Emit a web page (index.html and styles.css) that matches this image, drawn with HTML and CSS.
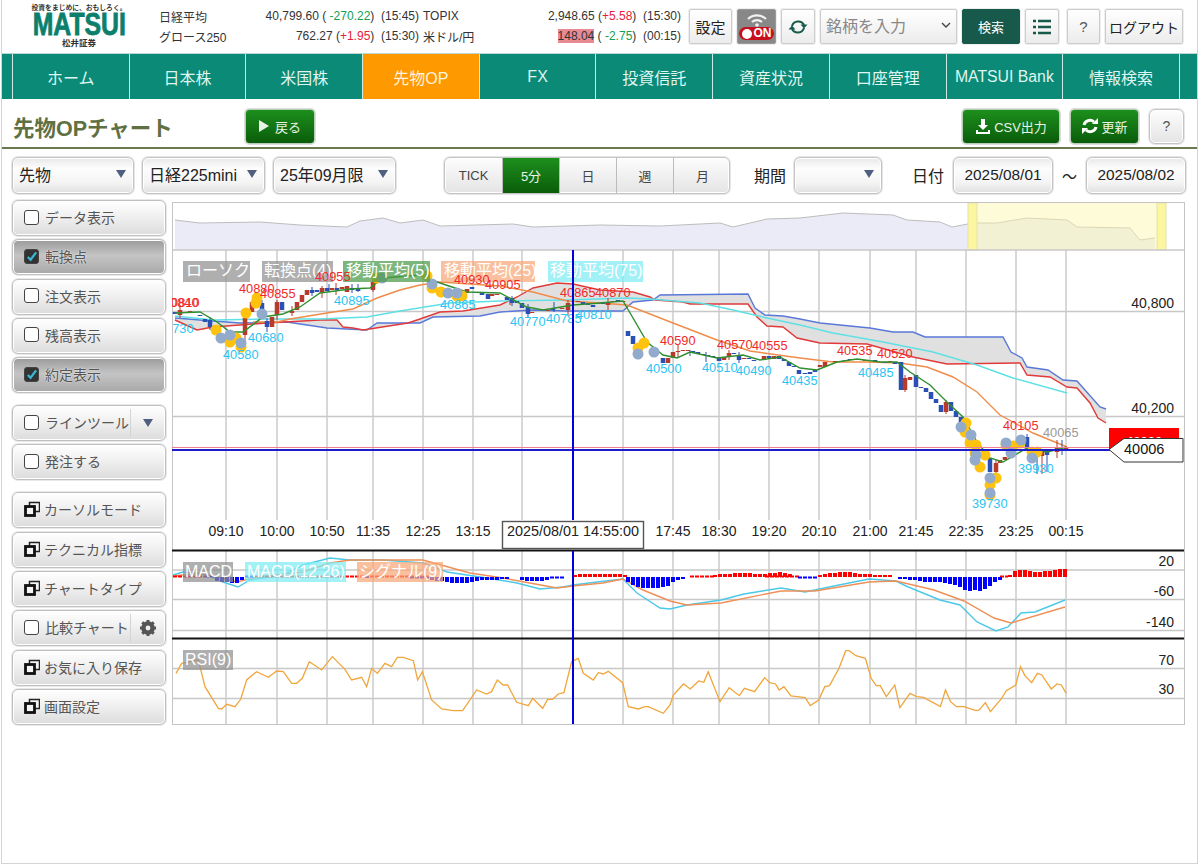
FILE: index.html
```html
<!DOCTYPE html>
<html lang="ja">
<head>
  <meta charset="UTF-8">
  <meta name="viewport" content="width=device-width, initial-scale=1.0">
  <title>先物OPチャート</title>
  <link rel="stylesheet" href="styles.css">
</head>
<body>
  <div class="page">
    <!-- Header -->
    <header class="header">
      <div class="logo">
        <span class="logo-tag">投資をまじめに、おもしろく。</span>
        <span class="logo-name">MATSUI</span>
        <span class="logo-sub">松井証券</span>
      </div>
      <div class="ticker">
        <div class="ticker-cell one"><span>日経平均</span><span>40,799.60 ( <i class="down">-270.22</i>)&nbsp; (15:45)</span></div>
        <div class="ticker-cell two"><span>TOPIX</span><span>2,948.65 (<i class="up">+5.58</i>)&nbsp; (15:30)</span></div>
        <div class="ticker-cell one"><span>グロース250</span><span>762.27 (<i class="up">+1.95</i>)&nbsp; (15:30)</span></div>
        <div class="ticker-cell two"><span>米ドル/円</span><span><b class="flash">148.04</b> ( <i class="down">-2.75</i>)&nbsp; (00:15)</span></div>
      </div>
      <div class="tools">
        <button class="tool tool-set">設定</button>
        <button class="tool tool-on">
          <svg width="24" height="15" viewBox="0 0 24 15"><path d="M3 7a13 13 0 0 1 18 0M7 10a7.500 7.500 0 0 1 10 0" fill="none" stroke="#f2f2f2" stroke-width="2.200"/><circle cx="12" cy="13" r="1.800" fill="#f2f2f2"/></svg>
          <span class="on-pill"><u></u>ON</span>
        </button>
        <button class="tool tool-icon">
          <svg width="20" height="20" viewBox="0 0 20 20"><path d="M4 9a6.500 6.500 0 0 1 12-1M16 11a6.500 6.500 0 0 1-12 1" fill="none" stroke="#17594a" stroke-width="2"/><path d="M12.500 7.500h7l-3.500 4zM7.500 12.500h-7l3.500-4z" fill="#17594a"/></svg>
        </button>
        <div class="tool search-box">
          <span>銘柄を入力</span>
          <svg width="10" height="6" viewBox="0 0 10 6"><path d="M1 1l4 4 4-4" fill="none" stroke="#444" stroke-width="1.400"/></svg>
        </div>
        <button class="tool tool-search">検索</button>
        <button class="tool tool-icon">
          <svg width="18" height="16" viewBox="0 0 18 16"><path d="M0 2h3M5 2h13M0 8h3M5 8h13M0 14h3M5 14h13" stroke="#17594a" stroke-width="2.400"/></svg>
        </button>
        <button class="tool tool-help">?</button>
        <button class="tool tool-logout">ログアウト</button>
      </div>
    </header>

    <!-- Main navigation -->
    <nav class="nav">
      <span class="nav-gap"></span>
      <a>ホーム</a>
      <a>日本株</a>
      <a>米国株</a>
      <a class="active">先物OP</a>
      <a>FX</a>
      <a>投資信託</a>
      <a>資産状況</a>
      <a>口座管理</a>
      <a class="small">MATSUI Bank</a>
      <a>情報検索</a>
      <span class="nav-gap"></span>
    </nav>

    <!-- Title row -->
    <div class="title-row">
      <h1>先物OPチャート</h1>
      <button class="green-btn back-btn"><i class="play"></i>戻る</button>
      <div class="title-actions">
        <button class="green-btn csv-btn">
          <svg width="16" height="17" viewBox="0 0 16 17"><path d="M6 1h4v6h3l-5 5-5-5h3zM1 12v4h14v-4h-2v2H3v-2z" fill="#fff"/></svg>CSV出力
        </button>
        <button class="green-btn refresh-btn">
          <svg width="18" height="18" viewBox="0 0 18 18"><path d="M3 8a6 6 0 0 1 10-3M15 10a6 6 0 0 1-10 3" fill="none" stroke="#fff" stroke-width="3"/><path d="M11 7h6V1zM7 11H1v6z" fill="#fff"/></svg>更新
        </button>
        <button class="soft-btn help-btn">?</button>
      </div>
    </div>

    <!-- Chart conditions -->
    <div class="controls">
      <div class="soft-btn select w-122"><span>先物</span><i class="caret"></i></div>
      <div class="soft-btn select w-123"><span>日経225mini</span><i class="caret"></i></div>
      <div class="soft-btn select w-123"><span>25年09月限</span><i class="caret"></i></div>
      <div class="soft-btn segment">
        <span class="tick">TICK</span>
        <span class="on">5分</span>
        <span>日</span>
        <span>週</span>
        <span>月</span>
      </div>
      <label class="ctl-label period-label">期間</label>
      <div class="soft-btn select w-88"><span></span><i class="caret"></i></div>
      <label class="ctl-label date-label">日付</label>
      <div class="soft-btn date">2025/08/01</div>
      <span class="tilde">～</span>
      <div class="soft-btn date">2025/08/02</div>
    </div>

    <div class="content">
      <!-- Left side buttons -->
      <aside class="side">
        <div class="side-group">
          <div class="side-btn"><i class="check"></i>データ表示</div>
          <div class="side-btn pressed"><i class="check checked"><svg width="14" height="14" viewBox="0 0 14 14"><path d="M3 7l3 3 6-8" fill="none" stroke="#3ab8d8" stroke-width="2.400"/></svg></i>転換点</div>
          <div class="side-btn"><i class="check"></i>注文表示</div>
          <div class="side-btn"><i class="check"></i>残高表示</div>
          <div class="side-btn pressed"><i class="check checked"><svg width="14" height="14" viewBox="0 0 14 14"><path d="M3 7l3 3 6-8" fill="none" stroke="#3ab8d8" stroke-width="2.400"/></svg></i>約定表示</div>
        </div>
        <div class="side-group">
          <div class="side-btn split"><i class="check"></i>ラインツール<span class="side-extra"><i class="caret"></i></span></div>
          <div class="side-btn"><i class="check"></i>発注する</div>
        </div>
        <div class="side-group">
          <div class="side-btn"><svg class="win" viewBox="0 0 16 16"><rect class="win-back" x="5.500" y="1.500" width="10" height="9"/><rect class="win-front" x="1.500" y="5.500" width="9" height="9"/></svg>カーソルモード</div>
          <div class="side-btn"><svg class="win" viewBox="0 0 16 16"><rect class="win-back" x="5.500" y="1.500" width="10" height="9"/><rect class="win-front" x="1.500" y="5.500" width="9" height="9"/></svg>テクニカル指標</div>
          <div class="side-btn"><svg class="win" viewBox="0 0 16 16"><rect class="win-back" x="5.500" y="1.500" width="10" height="9"/><rect class="win-front" x="1.500" y="5.500" width="9" height="9"/></svg>チャートタイプ</div>
          <div class="side-btn split"><i class="check"></i>比較チャート<span class="side-extra">
            <svg width="18" height="18" viewBox="0 0 18 18"><circle cx="9" cy="9" r="5" fill="none" stroke="#555" stroke-width="3.600"/><path d="M9 1v16M1 9h16M3.300 3.300l11.400 11.400M14.700 3.300L3.300 14.700" stroke="#555" stroke-width="3"/><circle cx="9" cy="9" r="2.400" fill="#eee"/></svg>
          </span></div>
          <div class="side-btn"><svg class="win" viewBox="0 0 16 16"><rect class="win-back" x="5.500" y="1.500" width="10" height="9"/><rect class="win-front" x="1.500" y="5.500" width="9" height="9"/></svg>お気に入り保存</div>
          <div class="side-btn"><svg class="win" viewBox="0 0 16 16"><rect class="win-back" x="5.500" y="1.500" width="10" height="9"/><rect class="win-front" x="1.500" y="5.500" width="9" height="9"/></svg>画面設定</div>
        </div>
      </aside>

      <!-- Chart, drawn in page coordinates -->
      <svg class="chart" width="1013" height="523" viewBox="172 202 1013 523">
        <!-- navigator -->
        <polygon class="nav-area" points="175,250 175,220 200,223 260,222 300,225 347,227 360,221 383,218 400,223 423,220 440,226 513,224 533,227 600,225 660,226 720,223 733,227 767,219 800,218 843,213 893,215 907,220 940,222 952,227 973,223 997,223 1027,218 1067,220 1077,227 1130,228 1140,240 1155,238 1155,250"/>
        <polyline class="nav-line" points="175,220 200,223 260,222 300,225 347,227 360,221 383,218 400,223 423,220 440,226 513,224 533,227 600,225 660,226 720,223 733,227 767,219 800,218 843,213 893,215 907,220 940,222 952,227 973,223 997,223 1027,218 1067,220 1077,227 1130,228 1140,240 1155,238"/>
        <rect class="nav-range" x="968" y="203" width="198" height="47"/>
        <rect class="nav-handle" x="968" y="203" width="9" height="47"/>
        <rect class="nav-handle" x="1157" y="203" width="9" height="47"/>

        <!-- grid -->
        <path class="grid" d="M226 250V520M277 250V520M327 250V520M373 250V520M423 250V520M473 250V520M522 250V520M623 250V520M673 250V520M719 250V520M769 250V520M819 250V520M870 250V520M916 250V520M966 250V520M1016 250V520M1066 250V520"/>
        <path class="grid" d="M226 551V724M277 551V724M327 551V724M373 551V724M423 551V724M473 551V724M522 551V724M623 551V724M673 551V724M719 551V724M769 551V724M819 551V724M870 551V724M916 551V724M966 551V724M1016 551V724M1066 551V724"/>
        <path class="grid" d="M172 311.500H1184M172 416.500H1184M172 570H1184M172 599.500H1184M172 630.500H1184M172 668.500H1184M172 698.500H1184"/>
        <rect class="frame" x="172.500" y="202.500" width="1012" height="522"/>
        <path class="grid" d="M172 250H1184"/>
        <path class="heavy" d="M172 550.500H1184M172 638.500H1184"/>

        <!-- ichimoku cloud -->
        <polygon class="cloud" points="175,318 200,320 240,323 287,322 327,328 367,330 377,323 420,323 433,317 480,316 500,312 533,310 567,311 623,311 633,302 653,300 660,295 748,294 755,308 765,315 783,316 800,319 820,323 850,326 870,328 893,332 913,332 925,337 1003,337 1011,352 1022,358 1027,367 1048,370 1063,380 1077,381 1100,407 1106,409 1106,423 1098,418 1090,403 1077,388 1067,387 1050,377 1027,375 1020,363 947,364 913,357 867,344 820,343 800,339 797,338 783,327 767,326 757,317 748,304 690,304 683,302 655,300 650,297 633,292 600,290 573,284 557,283 533,288 517,297 500,305 463,311 440,312 420,319 408,323 363,330 353,328 343,327 337,320 320,320 267,323 213,327 197,330 175,320"/>
        <polyline class="ln-cloud-b" points="175,318 200,320 240,323 287,322 327,328 367,330 377,323 420,323 433,317 480,316 500,312 533,310 567,311 623,311 633,302 653,300 660,295 748,294 755,308 765,315 783,316 800,319 820,323 850,326 870,328 893,332 913,332 925,337 1003,337 1011,352 1022,358 1027,367 1048,370 1063,380 1077,381 1100,407 1106,409"/>
        <polyline class="ln-cloud-r" points="175,320 197,330 213,327 267,323 320,320 337,320 343,327 353,328 363,330 408,323 420,319 440,312 463,311 500,305 517,297 533,288 557,283 573,284 600,290 633,292 650,297 655,300 683,302 690,304 748,304 757,317 767,326 783,327 797,338 820,343 867,344 913,357 947,364 1020,363 1027,375 1050,377 1067,387 1077,388 1090,403 1098,418 1106,423"/>

        <!-- moving averages -->
        <polyline class="ln-ma75" points="175,316 213,320 267,319 320,319 367,317 400,311 450,303 500,301 567,300 627,298 650,299 700,303 733,310 767,318 800,325 833,333 883,342 933,352 977,365 1013,378 1067,393"/>
        <polyline class="ln-ma25" points="253,322 277,322 290,319 327,313 353,309 377,298 400,290 420,285 440,282 500,286 533,292 567,301 600,303 627,305 673,323 717,340 750,351 800,358 833,362 867,362 900,363 927,367 953,377 977,392 1000,415 1033,433 1067,447"/>

        <!-- candles -->
        <path class="wick-b" d="M210 317V330M262 300V314M267 318V332M312 287V296M329 284V292M352 284V293M358 284V292M512 296V306M528 304V318M554 302V312M690 350V356M706 352V362M739 352V363M1027 434V450M1047 455V472M1062 440V455M1037 452V474"/>
        <path class="wick-r" d="M180 305V318M245 312V340M277 300V320M292 306V316M322 286V298M336 283V295M373 278V292M510 300V305M568 300V316M608 298V312M678 345V358M729 350V360M905 375V392M946 400V414M996 460V478M1042 452V474M1057 440V458"/>
        <path class="body-b" d="M175 312V314M200 315V316M205 319V322M210 320V327M262 303V310M267 321V327M282 302V310M312 290V293M317 290V292M327 288V291M337 288V290M352 288V290M358 289V291M472 287V289M482 292V295M488 294V299M507 297V300M512 298V303M517 301V303M522 303V308M528 307V314M553 308V310M583 302V304M588 303V305M593 305V307M603 302V304M618 300V301M628 331V336M633 336V344M663 358V363M693 351V353M698 352V354M703 354V355M708 355V356M713 356V357M719 357V361M734 353V354M739 355V360M749 358V359M754 360V361M769 356V358M779 356V359M784 359V361M789 362V366M794 366V367M799 370V374M805 373V374M810 372V374M815 370V372M850 359V360M875 360V361M885 362V363M895 362V364M901 362V390M916 375V387M921 387V388M926 388V392M931 392V399M936 399V403M941 405V412M951 402V411M956 411V417M961 417V423M990 458V472M1027 437V447M1047 450V455"/>
        <path class="body-r" d="M180 310V315M190 311V312M245 318V335M252 302V312M272 317V327M277 302V315M292 311V313M297 302V310M302 295V302M307 290V295M322 288V293M332 288V290M342 287V289M347 286V292M373 282V290M467 289V293M492 294V296M497 294V295M532 312V313M548 310V311M562 308V309M568 303V310M578 301V302M598 303V304M608 302V305M613 301V302M623 301V302M668 358V363M673 352V358M678 351V352M683 350V351M688 350V351M724 357V360M729 353V357M744 358V359M764 356V359M774 356V359M820 365V367M825 362V367M835 361V362M845 360V361M865 360V361M890 361V362M905 378V390M910 377V380M946 402V412M996 463V472M1000 460V463M1005 457V460M1042 450V456M1057 447V452M1066 448V449"/>
        <polyline class="ln-ma5" points="175,313 200,312 217,322 230,332 243,332 263,317 283,314 300,307 320,293 350,289 370,288 383,278 420,275 440,283 467,292 500,293 527,307 543,310 573,305 600,303 623,301 633,318 647,342 663,355 677,358 690,352 717,358 743,355 760,360 780,357 800,368 817,370 837,362 857,359 880,362 897,362 910,372 930,385 947,402 963,417 977,442 990,458 1003,462 1027,448 1047,452 1067,447"/>

        <!-- fills -->
        <g class="mark-y">
          <circle cx="216" cy="330" r="5.500"/><circle cx="230" cy="342" r="5.500"/><circle cx="236" cy="338" r="5.500"/><circle cx="241" cy="347" r="5.500"/><circle cx="246" cy="313" r="5.500"/><circle cx="256" cy="303" r="5.500"/><circle cx="257" cy="298" r="5.500"/><circle cx="377" cy="278" r="5.500"/>
          <circle cx="427" cy="276" r="5.500"/><circle cx="432" cy="288" r="5.500"/><circle cx="441" cy="292" r="5.500"/><circle cx="457" cy="296" r="5.500"/><circle cx="462" cy="296" r="5.500"/>
          <circle cx="644" cy="343" r="5.500"/><circle cx="638" cy="348" r="5.500"/>
          <circle cx="966" cy="423" r="5.500"/><circle cx="965" cy="432" r="5.500"/><circle cx="970" cy="443" r="5.500"/><circle cx="976" cy="445" r="5.500"/><circle cx="985" cy="455" r="5.500"/><circle cx="975" cy="453" r="5.500"/><circle cx="980" cy="467" r="5.500"/><circle cx="996" cy="478" r="5.500"/><circle cx="990" cy="485" r="5.500"/><circle cx="990" cy="495" r="5.500"/><circle cx="1006" cy="445" r="5.500"/><circle cx="1013" cy="446" r="5.500"/><circle cx="1020" cy="443" r="5.500"/><circle cx="1032" cy="452" r="5.500"/><circle cx="1037" cy="452" r="5.500"/>
        </g>
        <g class="mark-b">
          <circle cx="221" cy="338" r="5.500"/><circle cx="230" cy="335" r="5.500"/><circle cx="241" cy="343" r="5.500"/><circle cx="262" cy="314" r="5.500"/><circle cx="382" cy="278" r="5.500"/>
          <circle cx="432" cy="284" r="5.500"/><circle cx="448" cy="293" r="5.500"/><circle cx="457" cy="293" r="5.500"/>
          <circle cx="638" cy="354" r="5.500"/><circle cx="654" cy="352" r="5.500"/>
          <circle cx="961" cy="427" r="5.500"/><circle cx="971" cy="435" r="5.500"/><circle cx="976" cy="455" r="5.500"/><circle cx="975" cy="460" r="5.500"/><circle cx="990" cy="478" r="5.500"/><circle cx="990" cy="493" r="5.500"/><circle cx="1006" cy="443" r="5.500"/><circle cx="1011" cy="453" r="5.500"/><circle cx="1021" cy="440" r="5.500"/><circle cx="1032" cy="458" r="5.500"/>
        </g>

        <!-- legends -->
        <rect class="lg lg-gray" x="183" y="261" width="67" height="21"/>
        <text class="lg-text" x="186" y="276">ローソク</text>
        <rect class="lg lg-gray" x="262" y="261" width="71" height="21"/>
        <text class="lg-text" x="264" y="276">転換点(4)</text>
        <rect class="lg lg-green" x="343" y="261" width="87" height="21"/>
        <text class="lg-text" x="346" y="276">移動平均(5)</text>
        <rect class="lg lg-orange" x="441" y="261" width="94" height="21"/>
        <text class="lg-text" x="444" y="276">移動平均(25)</text>
        <rect class="lg lg-cyan" x="548" y="261" width="95" height="21"/>
        <text class="lg-text" x="550" y="276">移動平均(75)</text>

        <!-- high and low prices -->
        <g class="p-red">
          <text x="163" y="307">40840</text><text x="164" y="307">40810</text>
          <text x="239" y="293">40880</text><text x="260" y="298">40855</text><text x="315" y="281">40955</text>
          <text x="454" y="284">40930</text><text x="485" y="289">40905</text><text x="560" y="297">40865</text><text x="595" y="297">40870</text>
          <text x="660" y="345">40590</text><text x="717" y="349">40570</text><text x="752" y="350">40555</text>
          <text x="837" y="355">40535</text><text x="877" y="358">40520</text><text x="1003" y="430">40105</text>
        </g>
        <g class="p-cyan">
          <text x="158" y="333">40730</text><text x="223" y="359">40580</text><text x="248" y="342">40680</text><text x="334" y="305">40895</text>
          <text x="440" y="309">40865</text><text x="510" y="326">40770</text><text x="546" y="323">40785</text><text x="576" y="319">40810</text>
          <text x="646" y="373">40500</text><text x="702" y="372">40510</text><text x="736" y="375">40490</text><text x="782" y="385">40435</text>
          <text x="858" y="377">40485</text><text x="1018" y="473">39930</text><text x="972" y="508">39730</text>
        </g>
        <text class="p-gray" x="1043" y="437">40065</text>

        <!-- current price -->
        <path class="cur-pink" d="M172 447.500H1110"/>
        <path class="cur-blue" d="M172 450H1110"/>
        <rect class="tag-red" x="1109" y="428" width="70" height="21"/>
        <text class="tag-red-text" x="1126" y="446">40020</text>
        <polygon class="tag" points="1109,449.500 1124,438.500 1183,438.500 1183,462 1124,462"/>
        <text class="tag-text" x="1124" y="454">40006</text>

        <!-- macd -->
        <polyline class="ln-macd" points="173,575 183,572 207,575 223,582 238,587 250,580 270,577 287,573 303,565 330,558 350,560 383,560 423,563 447,572 487,578 517,583 540,589 563,587 573,585 597,582 623,579 637,593 660,608 670,609 687,605 721,600 744,594 781,588 805,592 839,585 869,579 896,581 906,586 940,600 960,605 977,622 996,631 1008,627 1021,613 1035,612 1065,600"/>
        <polyline class="ln-signal" points="173,576 200,573 237,582 257,577 303,572 330,563 350,560 423,560 470,573 503,578 557,588 573,586 603,583 623,579 643,590 670,601 687,605 721,603 781,591 815,591 869,582 896,581 934,590 964,601 994,618 1011,623 1065,607"/>
        <path class="hist-dash-r" d="M173 576.500H205M255 576.500H430M690 576.500H715M765 576.500H800M1000 576.500H1008"/>
        <path class="hist-dash-b" d="M205 576.500H215M245 576.500H255M365 577H370M410 577.500H430M550 577.500H565M798 577.500H818"/>
        <path class="hist-b" d="M217 577V581M222 577V582M227 577V582M232 577V583M237 577V583M242 577V580M432 577V580M437 577V581M442 577V581M447 577V582M452 577V583M457 577V583M462 577V583M467 577V583M472 577V582M477 577V581M482 577V580M487 577V580M492 577V580M497 577V580M502 577V579M507 577V579M522 577V580M527 577V581M532 577V581M537 577V581M542 577V581M547 577V580M628 577V582M633 577V585M638 577V587M643 577V588M648 577V588M653 577V588M658 577V588M663 577V587M668 577V586M673 577V582M678 577V580M683 577V579M900 577V579M905 577V579M910 577V580M915 577V580M920 577V581M925 577V582M930 577V582M935 577V582M940 577V582M945 577V583M950 577V584M955 577V585M960 577V587M965 577V590M970 577V591M975 577V590M980 577V591M985 577V589M990 577V586M995 577V582M1000 577V580"/>
        <path class="hist-r" d="M575 577V575M580 577V574M585 577V574M590 577V574M595 577V574M600 577V574M605 577V574M610 577V574M615 577V574M620 577V574M625 577V575M715 577V575M720 577V574M725 577V574M730 577V574M735 577V573M740 577V573M745 577V573M750 577V573M755 577V574M760 577V574M765 577V574M770 577V573M775 577V573M780 577V572M785 577V573M790 577V574M820 577V575M825 577V574M830 577V573M835 577V573M840 577V572M845 577V572M850 577V572M855 577V573M860 577V574M865 577V574M870 577V574M875 577V575M880 577V575M885 577V575M890 577V575M1010 577V575M1015 577V571M1020 577V570M1025 577V570M1030 577V571M1035 577V572M1040 577V572M1045 577V571M1050 577V571M1055 577V570M1060 577V569M1065 577V569"/>
        <rect class="lg lg-gray" x="183" y="562" width="50" height="20"/>
        <text class="lg-text" x="185" y="577">MACD</text>
        <rect class="lg lg-cyan" x="245" y="562" width="101" height="20"/>
        <text class="lg-text" x="247" y="577">MACD(12,26)</text>
        <rect class="lg lg-orange" x="357" y="562" width="86" height="20"/>
        <text class="lg-text" x="359" y="577">シグナル(9)</text>

        <!-- rsi -->
        <g transform="translate(170 510) scale(0.3333)">
          <polyline class="ln-rsi" points="18,490 35,460 85,450 105,530 145,595 155,597 170,583 195,590 212,568 230,510 260,485 295,502 320,483 340,485 365,520 380,520 397,505 418,455 455,480 487,440 525,478 545,510 575,502 590,530 605,475 622,490 645,460 665,470 682,442 700,442 730,452 743,510 757,485 785,570 815,597 850,602 878,602 920,540 950,552 965,545 982,510 1000,525 1013,525 1040,577 1075,587 1088,565 1118,595 1133,568 1148,568 1165,552 1182,548 1205,455 1225,445 1240,490 1270,510 1285,488 1300,492 1315,484 1358,518 1375,590 1405,597 1425,590 1435,590 1480,610 1500,585"/>
        </g>
        <g transform="translate(670 510) scale(0.338 0.3333)">
          <polyline class="ln-rsi" points="0,585 10,555 40,522 60,537 85,513 100,517 113,485 148,575 175,533 205,557 220,535 250,545 280,503 295,518 312,522 323,540 337,530 358,558 400,563 415,587 440,570 458,530 472,527 500,475 520,422 530,422 550,437 578,445 595,505 610,527 622,527 640,560 665,525 680,593 710,550 730,560 750,562 800,590 815,540 830,575 848,590 870,590 905,602 915,600 933,578 948,605 980,567 995,542 1023,525 1037,470 1050,497 1070,518 1087,490 1100,495 1128,537 1145,522 1158,525 1172,550"/>
        </g>
        <rect class="lg lg-gray" x="183" y="650" width="50" height="20"/>
        <text class="lg-text" x="185" y="665">RSI(9)</text>

        <!-- crosshair -->
        <path class="cross" d="M573 250V520M573 551V724"/>

        <!-- axis labels -->
        <g class="axis-x">
          <text x="226" y="536">09:10</text><text x="277" y="536">10:00</text><text x="327" y="536">10:50</text><text x="373" y="536">11:35</text><text x="423" y="536">12:25</text><text x="473" y="536">13:15</text>
          <text x="673" y="536">17:45</text><text x="719" y="536">18:30</text><text x="769" y="536">19:20</text><text x="819" y="536">20:10</text><text x="870" y="536">21:00</text><text x="916" y="536">21:45</text><text x="966" y="536">22:35</text><text x="1016" y="536">23:25</text><text x="1066" y="536">00:15</text>
        </g>
        <rect class="cross-box" x="502.500" y="521.500" width="141" height="27"/>
        <text class="axis-x cross-text" x="573" y="536">2025/08/01 14:55:00</text>
        <g class="axis-y">
          <text x="1174" y="308">40,800</text><text x="1174" y="413">40,200</text>
          <text x="1174" y="566">20</text><text x="1174" y="596">-60</text><text x="1174" y="627">-140</text>
          <text x="1174" y="665">70</text><text x="1174" y="694">30</text>
        </g>
      </svg>
    </div>
  </div>
</body>
</html>
```

FILE: styles.css
```css
* {
  box-sizing: border-box;
}

body {
  margin: 0;
  background: #fff;
  color: #222;
  font-family: "Liberation Sans", "Noto Sans CJK JP", sans-serif;
  font-size: 14px;
}

button {
  font-family: inherit;
  cursor: pointer;
}

i {
  font-style: normal;
}

.page {
  width: 1197px;
  height: 864px;
  margin-left: 1px;
  border: 1px solid #d4d4d4;
  border-top: none;
}

/* Header */
.header {
  display: flex;
  height: 53px;
}

.logo {
  display: flex;
  flex-direction: column;
  align-items: center;
  width: 92px;
  margin-left: 31px;
  padding-top: 3px;
  color: #0b7f6c;
}

.logo-tag {
  color: #333;
  font-size: 6.800px;
  font-weight: bold;
  line-height: 9px;
  white-space: nowrap;
}

.logo-name {
  font-size: 31px;
  font-weight: bold;
  line-height: 25px;
  letter-spacing: 0;
  transform: scaleX(.8);
  -webkit-text-stroke: .8px #0b7f6c;
}

.logo-sub {
  margin-top: 1px;
  color: #333;
  font-size: 8.500px;
  font-weight: bold;
  line-height: 10px;
}

.ticker {
  display: grid;
  grid-template-columns: 260px 258px;
  grid-auto-rows: 20px;
  gap: 0 4px;
  width: 522px;
  margin-left: 34px;
  padding-top: 6px;
  color: #333;
  font-size: 12px;
}

.ticker-cell {
  display: flex;
  justify-content: space-between;
  align-items: center;
  white-space: nowrap;
}

.down {
  color: #12a050;
}

.up {
  color: #e8203a;
}

.flash {
  background: #e98a92;
  font-weight: normal;
}

.tools {
  display: flex;
  gap: 5px;
  margin-left: 8px;
  padding-top: 9px;
  height: 44px;
}

.tool {
  height: 35px;
  padding: 0;
  border: 1px solid #ccc;
  border-radius: 2px;
  background: linear-gradient(#fff, #ececec);
  color: #222;
  font-size: 15px;
  box-shadow: 0 0 0 1px #eee;
}

.tool-set {
  width: 43px;
}

.tool-on {
  display: flex;
  flex-direction: column;
  align-items: center;
  width: 39px;
  padding-top: 2px;
  background: #888;
  border-color: #999;
}

.on-pill {
  display: flex;
  align-items: center;
  justify-content: center;
  gap: 2px;
  width: 35px;
  height: 13px;
  border-radius: 7px;
  background: #c8101c;
  color: #fff;
  font-size: 12px;
  font-weight: bold;
  line-height: 13px;
}

.on-pill u {
  width: 10px;
  height: 10px;
  border-radius: 50%;
  background: #fff;
}

.tool-icon {
  display: flex;
  align-items: center;
  justify-content: center;
  width: 34px;
}

.search-box {
  display: flex;
  justify-content: space-between;
  align-items: center;
  width: 137px;
  padding: 0 5px 3px 5px;
  color: #888;
  font-size: 16px;
}

.tool-search {
  width: 58px;
  background: #17594a;
  border-color: #17594a;
  color: #fff;
  font-size: 13px;
}

.tool-help {
  width: 33px;
  margin-left: 3px;
  color: #555;
}

.tool-logout {
  width: 78px;
  font-size: 14px;
}

/* Navigation */
.nav {
  display: grid;
  grid-template-columns: 10px repeat(10, 116.700px) 1fr;
  height: 46px;
  background: #0b8a78;
  border-top: 1px solid #b9d8d0;
}

.nav a {
  display: flex;
  align-items: center;
  justify-content: center;
  border-left: 1px solid #cfeae4;
  color: #dff5ef;
  font-size: 16px;
}

.nav a.small {
  font-size: 15.800px;
  white-space: nowrap;
}

.nav a.active {
  background: #ff9900;
  color: #fff3dc;
}

.nav-gap:last-child {
  border-left: 1px solid #cfeae4;
}

/* Title row */
.title-row {
  display: flex;
  align-items: center;
  height: 50px;
  padding: 6px 13px 0 11px;
  border-bottom: 2px solid #6b7a4e;
}

h1 {
  width: 232px;
  margin: 0;
  color: #5f7042;
  font-size: 21.500px;
  font-weight: bold;
}

.green-btn {
  display: flex;
  align-items: center;
  justify-content: center;
  height: 35px;
  padding: 0;
  border: 1px solid #b5ccb5;
  border-radius: 4px;
  background: linear-gradient(#1d8f1d, #0a5c0a);
  color: #e8f4e8;
  font-size: 13px;
  box-shadow: 0 0 0 1px #ddd;
}

.back-btn {
  width: 70px;
  gap: 6px;
}

.play {
  width: 0;
  height: 0;
  border-left: 10px solid #e8f4e8;
  border-top: 6px solid transparent;
  border-bottom: 6px solid transparent;
}

.title-actions {
  display: flex;
  gap: 10px;
  margin-left: auto;
}

.csv-btn {
  gap: 3px;
  width: 98px;
}

.refresh-btn {
  gap: 2px;
  width: 69px;
}

.soft-btn {
  border: 1px solid #c4c4c4;
  border-radius: 6px;
  background: linear-gradient(#fdfdfd, #e4e4e4);
  box-shadow: inset 0 0 0 1px #fff, 0 0 0 1px #e6e6e6;
}

.help-btn {
  width: 35px;
  height: 35px;
  color: #555;
  font-size: 14px;
}

/* Chart conditions */
.controls {
  display: flex;
  align-items: center;
  height: 38px;
  margin-top: 7px;
  padding-left: 10px;
}

.select {
  display: flex;
  justify-content: space-between;
  align-items: center;
  height: 37px;
  margin-right: 8px;
  padding: 0 7px 2px 6px;
  background: linear-gradient(#e8e8e8, #fdfdfd 30%, #f4f4f4 70%, #e0e0e0);
  font-size: 16px;
  white-space: nowrap;
}

.w-122 {
  width: 122px;
}

.w-123 {
  width: 123px;
}

.w-88 {
  width: 88px;
  margin-right: 0;
}

.caret {
  width: 0;
  height: 0;
  flex: none;
  border-top: 8px solid #4f5f7f;
  border-left: 5px solid transparent;
  border-right: 5px solid transparent;
}

.segment {
  display: grid;
  grid-template-columns: 58px repeat(4, 57px);
  width: 286px;
  height: 37px;
  margin-left: 40px;
  overflow: hidden;
  font-size: 13px;
  color: #444;
}

.segment span {
  display: flex;
  align-items: center;
  justify-content: center;
  border-right: 1px solid #bbb;
}

.segment span:last-child {
  border-right: none;
}

.segment .on {
  background: linear-gradient(#1d8f1d, #0a5c0a);
  color: #e8f4e8;
}

.ctl-label {
  font-size: 16px;
}

.period-label {
  width: 40px;
  margin-left: 24px;
}

.date-label {
  width: 41px;
  margin-left: 30px;
}

.date {
  display: flex;
  align-items: center;
  justify-content: center;
  width: 100px;
  height: 37px;
  background: linear-gradient(#e8e8e8, #fdfdfd 30%, #f4f4f4 70%, #e0e0e0);
  font-size: 15.400px;
}

.tilde {
  width: 33px;
  text-align: center;
  font-size: 15px;
}

/* Side buttons */
.content {
  display: flex;
  gap: 6px;
  margin-top: 6px;
  padding-left: 10px;
}

.side {
  display: flex;
  flex-direction: column;
  gap: 12px;
  width: 154px;
}

.side-group {
  display: flex;
  flex-direction: column;
  gap: 3.300px;
}

.side-btn {
  display: flex;
  align-items: center;
  gap: 4px;
  height: 36px;
  padding: 0 0 2px 11px;
  border: 1px solid #c0c0c0;
  border-radius: 6px;
  background: linear-gradient(#fff, #f2f2f2 40%, #dcdcdc);
  box-shadow: inset 0 0 0 1px #fff, 0 0 0 1px #e8e8e8;
  color: #555;
  font-size: 14px;
  white-space: nowrap;
}

.side-btn.pressed {
  background: linear-gradient(#9a9a9a, #c4c4c4 45%, #a8a8a8);
  text-shadow: 0 0 2px #fff;
}

.split {
  position: relative;
}

.side-extra {
  position: absolute;
  top: 3px;
  right: 0;
  bottom: 3px;
  display: flex;
  align-items: center;
  justify-content: center;
  width: 35px;
  border-left: 1px solid #d4d4d4;
}

.check {
  display: flex;
  flex: none;
  width: 15px;
  height: 15px;
  margin-right: 2px;
  border: 1px solid #444;
  border-radius: 3px;
  background: #fff;
}

.check.checked {
  background: #333;
}

.win {
  flex: none;
  width: 16px;
  height: 16px;
}

.win-back {
  fill: #f4f4f4;
  stroke: #222;
  stroke-width: 1.500;
}

.win-front {
  fill: #f4f4f4;
  stroke: #111;
  stroke-width: 2.800;
}

/* Chart */
.chart {
  display: block;
  flex: none;
  margin-top: 2px;
}

.chart text {
  font-family: "Liberation Sans", "Noto Sans CJK JP", sans-serif;
}

.nav-area {
  fill: #ebebf7;
}

.nav-line {
  fill: none;
  stroke: #bdbdbd;
}

.nav-range {
  fill: #fdf9a8;
  fill-opacity: .45;
}

.nav-handle {
  fill: #fdf6a0;
  stroke: #e6e2a8;
  stroke-width: 1;
}

.grid {
  fill: none;
  stroke: #c8c8c8;
  stroke-width: 1.400;
}

.frame {
  fill: none;
  stroke: #c4c4c4;
}

.heavy {
  stroke: #111;
  stroke-width: 2;
}

.cloud {
  fill: #e0e0e0;
}

.ln-cloud-b,
.ln-cloud-r,
.ln-ma75,
.ln-ma25,
.ln-ma5,
.ln-macd,
.ln-signal,
.ln-rsi {
  fill: none;
  stroke-width: 1.400;
}

.ln-cloud-b {
  stroke: #5a78d8;
}

.ln-cloud-r {
  stroke: #e03a3a;
}

.ln-ma75 {
  stroke: #5fe0e4;
}

.ln-ma25 {
  stroke: #f08c4a;
}

.ln-ma5 {
  stroke: #2f8f2f;
}

.ln-macd {
  stroke: #4cc8e8;
}

.ln-signal {
  stroke: #ee9058;
}

.ln-rsi {
  stroke: #f0a63c;
  stroke-width: 3.900;
}

.wick-b {
  stroke: #2a4fb5;
  fill: none;
}

.wick-r {
  stroke: #b83a2a;
  fill: none;
}

.body-b {
  stroke: #2a4fb5;
  stroke-width: 4.500;
  fill: none;
}

.body-r {
  stroke: #b83a2a;
  stroke-width: 4.500;
  fill: none;
}

.mark-y {
  fill: #ffc20e;
}

.mark-b {
  fill: #92abcc;
}

.lg {
  opacity: .72;
}

.lg-gray {
  fill: #909090;
}

.lg-green {
  fill: #4a9a48;
}

.lg-orange {
  fill: #f8a878;
}

.lg-cyan {
  fill: #7eecf4;
}

.chart .lg-text {
  fill: #fff;
  font-size: 16px;
}

.p-red text {
  fill: #f02a2a;
  font-size: 12.800px;
}

.p-cyan text {
  fill: #2cc4f2;
  font-size: 12.800px;
}

.chart .p-gray {
  fill: #999;
  font-size: 12.800px;
}

.cur-pink {
  stroke: #f08090;
  stroke-width: 1;
}

.cur-blue {
  stroke: #1c1cc8;
  stroke-width: 2;
}

.tag-red {
  fill: #ff0000;
}

.chart .tag-red-text {
  fill: #fff;
  font-size: 13px;
  font-weight: bold;
}

.tag {
  fill: #fff;
  stroke: #333;
}

.chart .tag-text {
  fill: #111;
  font-size: 14.500px;
}

.hist-dash-r {
  stroke: #f00;
  stroke-width: 2;
  stroke-dasharray: 4 1;
}

.hist-dash-b {
  stroke: #00f;
  stroke-width: 2;
  stroke-dasharray: 4 1;
}

.hist-b {
  stroke: #00f;
  stroke-width: 4;
  fill: none;
}

.hist-r {
  stroke: #f00;
  stroke-width: 4;
  fill: none;
}

.cross {
  stroke: #0000d8;
  stroke-width: 2;
}

.cross-box {
  fill: #fff;
  stroke: #555;
  stroke-width: 1.400;
}

.axis-x text,
.chart text.axis-x {
  fill: #222;
  font-size: 14px;
  text-anchor: middle;
}

.chart text.cross-text {
  font-size: 14.400px;
}

.axis-y text {
  fill: #222;
  font-size: 14px;
  text-anchor: end;
}
```
